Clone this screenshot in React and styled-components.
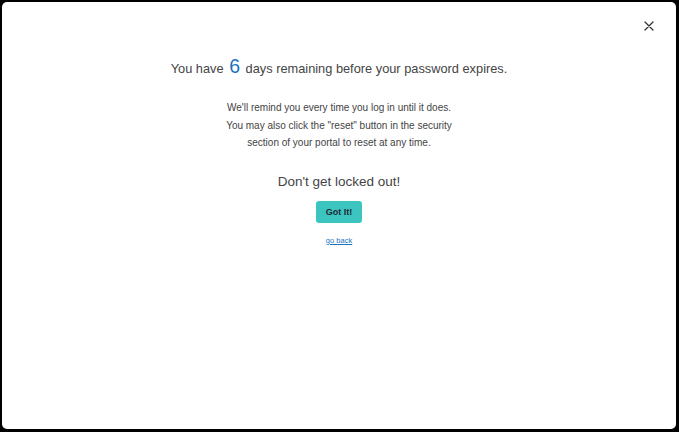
import { createGlobalStyle, styled } from "styled-components";

const Global = createGlobalStyle`
  html, body {
    margin: 0;
    padding: 0;
    background: #000;
  }
  body {
    font-family: "Liberation Sans", Arial, sans-serif;
  }
`;

const Frame = styled.div`
  width: 679px;
  height: 432px;
  box-sizing: border-box;
  padding: 2px 3px 3px 2px;
  background: #000;
`;

const Panel = styled.div`
  position: relative;
  height: 100%;
  background: #fff;
  border-radius: 5px;
  display: flex;
  flex-direction: column;
  align-items: center;
  padding-top: 52px;
  box-sizing: border-box;
  color: #3a3a3a;
  text-align: center;
`;

const CloseBtn = styled.button`
  position: absolute;
  top: 15px;
  right: 18px;
  width: 18px;
  height: 18px;
  padding: 0;
  border: 0;
  background: transparent;
  cursor: pointer;
  display: flex;
  align-items: center;
  justify-content: center;
`;

const Title = styled.h2`
  margin: 0;
  font-size: 12.8px;
  font-weight: 400;
  line-height: 24px;
  color: #444;
`;

const Days = styled.span`
  font-size: 19.5px;
  color: #1a73c0;
  margin: 0 2px;
`;

const Message = styled.p`
  margin: 18px 0 0;
  font-size: 10px;
  line-height: 17.5px;
  color: #444;
`;

const Warning = styled.h3`
  margin: 20px 0 0;
  font-size: 13.5px;
  font-weight: 400;
  line-height: 20px;
  color: #444;
`;

const GotIt = styled.button`
  margin-top: 9px;
  width: 46px;
  height: 22px;
  border: 0;
  border-radius: 3px;
  background: #3cc5c0;
  color: #1f2a33;
  font-family: inherit;
  font-size: 9px;
  font-weight: 700;
  cursor: pointer;
`;

const BackLink = styled.a`
  margin-top: 13px;
  font-size: 7.5px;
  color: #1a73c0;
  text-decoration: underline;
  cursor: pointer;
`;

export default function App() {
  return (
    <>
      <Global />
      <Frame>
        <Panel>
          <CloseBtn aria-label="close">
            <svg width="10" height="10" viewBox="0 0 10 10">
              <path d="M1 1L9 9M9 1L1 9" stroke="#333" strokeWidth="1.3" strokeLinecap="round" />
            </svg>
          </CloseBtn>
          <Title>
            You have <Days>6</Days> days remaining before your password expires.
          </Title>
          <Message>
            We'll remind you every time you log in until it does.
            <br />
            You may also click the "reset" button in the security
            <br />
            section of your portal to reset at any time.
          </Message>
          <Warning>Don't get locked out!</Warning>
          <GotIt>Got It!</GotIt>
          <BackLink>go back</BackLink>
        </Panel>
      </Frame>
    </>
  );
}
